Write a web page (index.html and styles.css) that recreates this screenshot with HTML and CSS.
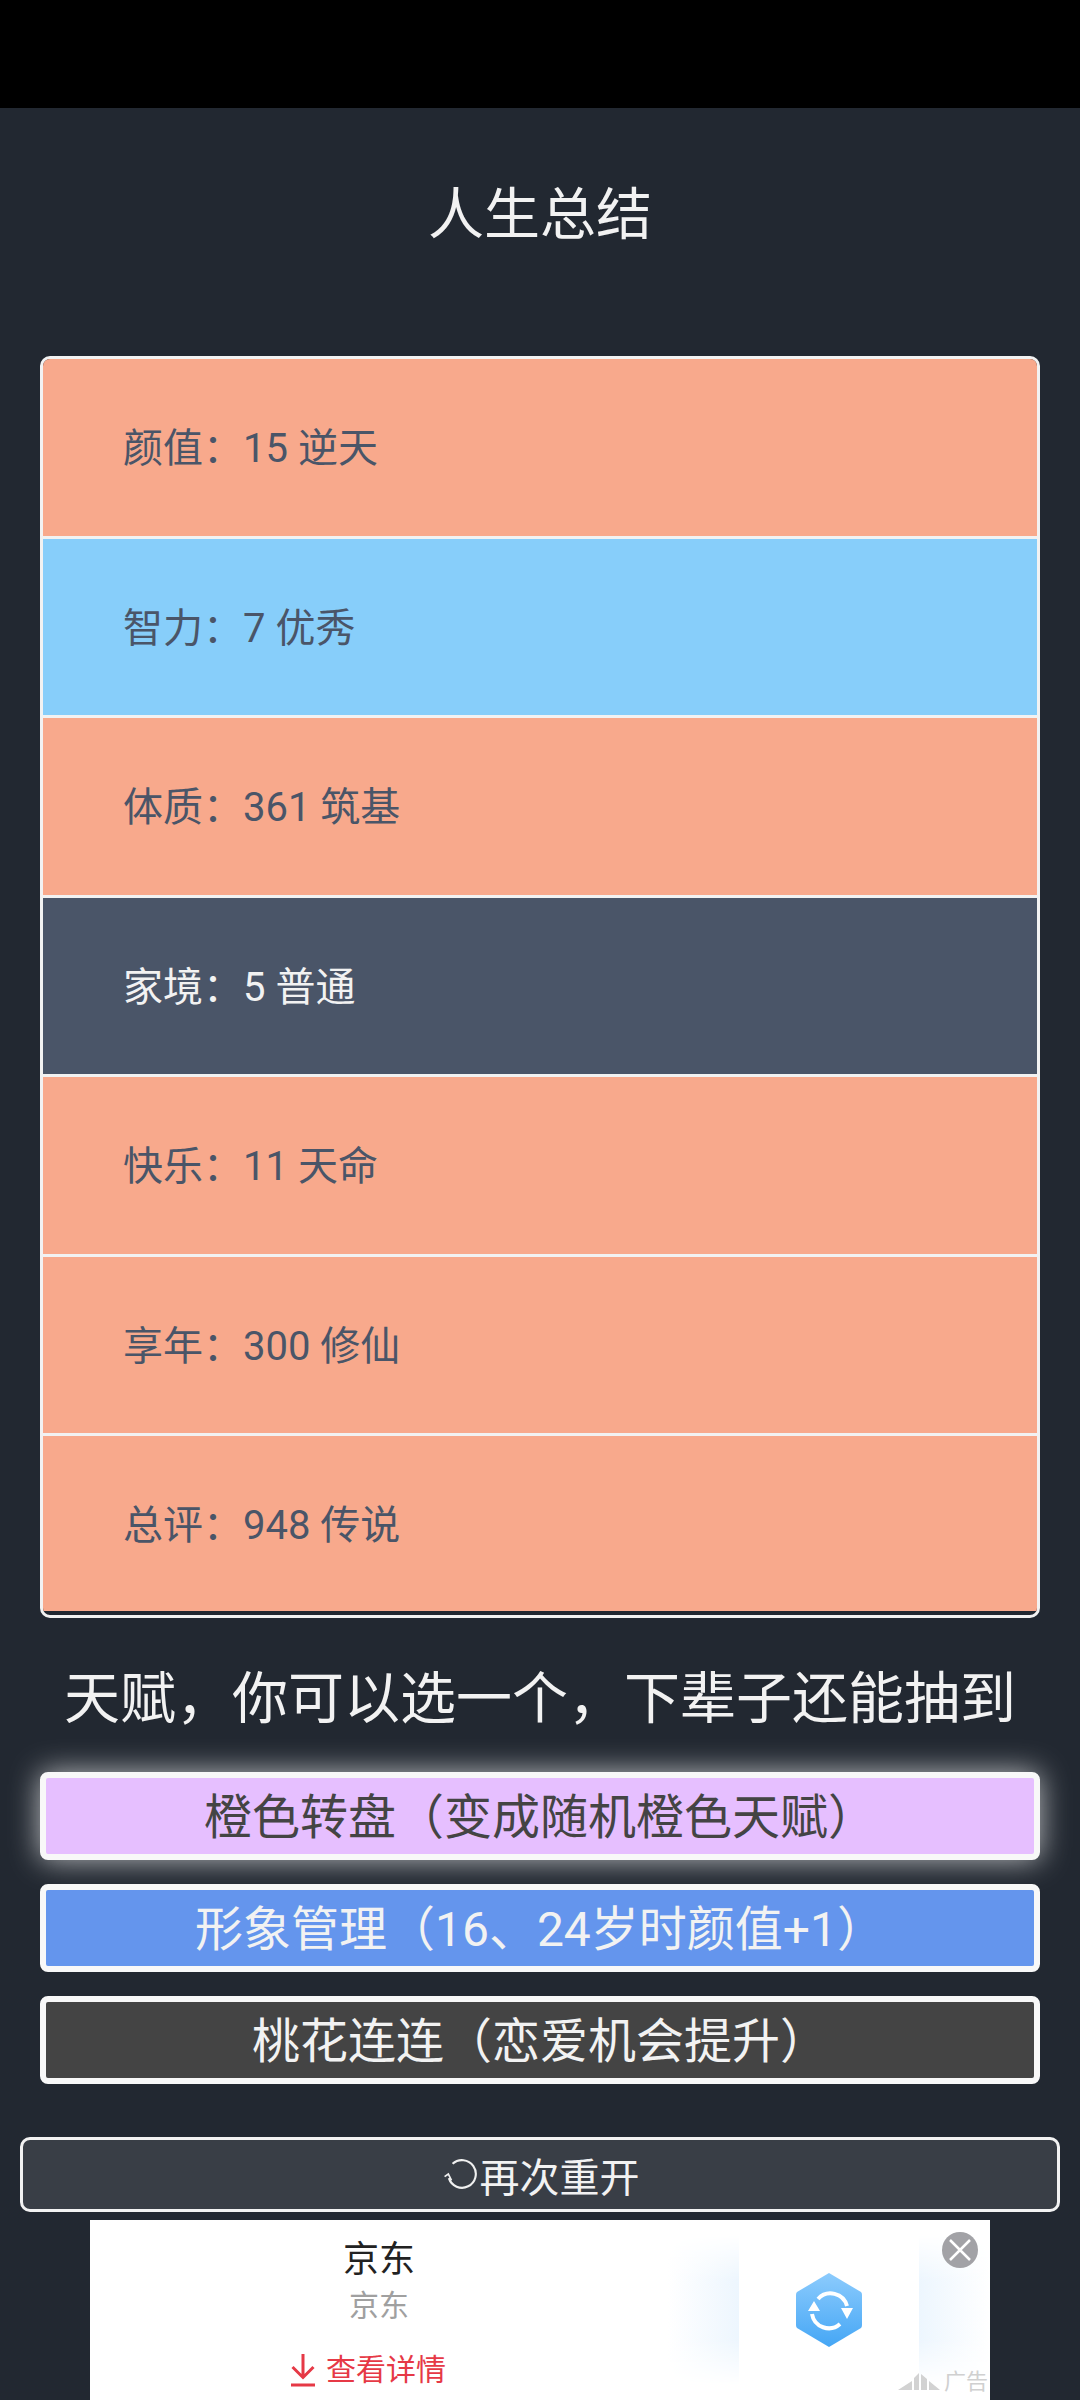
FILE: index.html
```html
<!DOCTYPE html>
<html lang="zh-CN">
<head>
  <meta charset="UTF-8" />
  <meta name="viewport" content="width=device-width, initial-scale=1.0" />
  <title>人生总结</title>
  <link rel="stylesheet" href="styles.css">
</head>
<body>
  <div class="status-bar"></div>

  <div class="page">
    <h1 class="title">人生总结</h1>

    <ul class="summary">
      <li class="row orange">颜值：15 逆天</li>
      <li class="row blue">智力：7 优秀</li>
      <li class="row orange">体质：361 筑基</li>
      <li class="row slate">家境：5 普通</li>
      <li class="row orange">快乐：11 天命</li>
      <li class="row orange">享年：300 修仙</li>
      <li class="row orange last">总评：948 传说</li>
    </ul>

    <h2 class="talent-title">天赋，你可以选一个，下辈子还能抽到</h2>

    <div class="talents">
      <button class="talent purple">橙色转盘（变成随机橙色天赋）</button>
      <button class="talent cornflower">形象管理（16、24岁时颜值+1）</button>
      <button class="talent grey">桃花连连（恋爱机会提升）</button>
    </div>

    <button class="restart">
      <svg class="restart-icon" viewBox="0 0 32 30" fill="none" stroke="#f0f0f0" stroke-width="2">
        <path d="M9 4.5 A13 13 0 1 1 5.5 18" />
        <path d="M1.5 16.5 L5 14 L8 20" stroke-width="1.6" />
      </svg>
      <span>再次重开</span>
    </button>
  </div>

  <div class="ad">
    <div class="ad-text">
      <div class="ad-name">京东</div>
      <div class="ad-sub">京东</div>
      <div class="ad-link">
        <svg class="ad-arrow" viewBox="0 0 26 34" fill="none" stroke="#e63946" stroke-width="3">
          <path d="M13 1 V24 M2.500 14 L13 24.500 L23.500 14 M1 32 H25" />
        </svg>
        <span>查看详情</span>
      </div>
    </div>
    <div class="ad-media">
      <div class="glow glow-left"></div>
      <svg class="app-icon" viewBox="0 0 68 76">
        <defs>
          <linearGradient id="hexFill" x1="0" y1="0" x2="0" y2="1">
            <stop offset="0" stop-color="#8ccbfd" />
            <stop offset="1" stop-color="#45a6f5" />
          </linearGradient>
        </defs>
        <path d="M34 1 L66 20 Q67 21 67 23 V53 Q67 55 66 56 L34 75 L2 56 Q1 55 1 53 V23 Q1 21 2 20 Z" fill="url(#hexFill)" />
        <path d="M23 27 A17 17 0 0 1 52 34 M45 52 A17 17 0 0 1 17 42" fill="none" stroke="#fff" stroke-width="4" />
        <path d="M13 39 L19 29 L25 39 Z M46 36 L58 36 L52 47 Z" fill="#fff" />
      </svg>
      <div class="glow glow-right"></div>
    </div>
    <div class="ad-close">
      <svg viewBox="0 0 36 36" stroke="#fff" stroke-width="2.500">
        <path d="M8 8 L28 28 M28 8 L8 28" />
      </svg>
    </div>
    <div class="ad-mark">
      <svg class="ad-logo" viewBox="0 0 42 18" fill="#d2d2d2">
        <path d="M0 17 L14 8 V17 Z M16 5 L21 0 V17 H16 Z M23 1 L29 6 V17 H23 Z M31 8 L42 17 H31 Z" />
      </svg>
      <span>广告</span>
    </div>
  </div>
</body>
</html>
```

FILE: styles.css
```css
* {
  box-sizing: border-box;
}
body {
  margin: 0;
  height: 2400px;
  overflow: hidden;
  background-color: #222831;
  font-family: Roboto, "Noto Sans CJK SC", sans-serif;
  color: #f2f2f2;
}
.status-bar {
  height: 108px;
  background-color: #000;
}
.page {
  padding: 0 20px;
}
.title {
  margin: 0;
  padding-top: 66px;
  height: 248px;
  font-size: 56px;
  line-height: 82px;
  font-weight: 400;
  text-align: center;
}

/* attribute list */
.summary {
  list-style: none;
  margin: 0 20px;
  padding: 0 0 4px;
  border: 3px solid #f2f2f2;
  border-radius: 10px;
  overflow: hidden;
}
.row {
  height: 179.5px;
  padding: 4px 0 0 80px;
  border-bottom: 3px solid #f2f2f2;
  font-size: 40px;
  line-height: 172px;
  color: #4a5568;
}
.row.last {
  border-bottom: none;
  height: 175px;
}
.orange {
  background-color: #f8a98c;
}
.blue {
  background-color: #87cefa;
}
.slate {
  background-color: #4a5568;
  color: #f2f2f2;
}

.talent-title {
  margin: 0;
  height: 154px;
  padding-top: 8px;
  font-size: 56px;
  line-height: 146px;
  font-weight: 400;
  text-align: center;
  white-space: nowrap;
}
.talents {
  display: flex;
  flex-direction: column;
  gap: 24px;
  margin: 0 20px;
}
.talent {
  height: 88px;
  padding: 3px 0 0;
  border: 6px solid #f8f8f8;
  border-radius: 8px;
  font-family: inherit;
  font-size: 48px;
  line-height: 72px;
  color: #f2f2f2;
}
.purple {
  background-color: #e6bfff;
  color: #444;
  box-shadow: 0 0 30px rgba(255, 255, 255, 0.7);
}
.cornflower {
  background-color: #6495ed;
}
.grey {
  background-color: #444;
}

.restart {
  display: flex;
  align-items: center;
  justify-content: center;
  gap: 3px;
  width: 100%;
  height: 75px;
  margin-top: 53px;
  padding: 0;
  border: 3px solid #f2f2f2;
  border-radius: 10px;
  background-color: #393e46;
  font-family: inherit;
  font-size: 40px;
  color: #f2f2f2;
}
.restart-icon {
  width: 34px;
  height: 32px;
  margin-left: 2px;
}

/* banner ad */
.ad {
  position: relative;
  display: flex;
  width: 900px;
  height: 180px;
  margin: 8px auto 0;
  background-color: #fff;
}
.ad-text {
  display: flex;
  flex-direction: column;
  align-items: center;
  width: 578px;
}
.ad-name {
  margin-top: 16px;
  font-size: 36px;
  line-height: 48px;
  color: #222;
}
.ad-sub {
  margin-top: 2px;
  font-size: 30px;
  line-height: 40px;
  color: #a0a0a0;
}
.ad-link {
  display: flex;
  align-items: center;
  gap: 10px;
  margin: 22px 22px 0 0;
  font-size: 30px;
  line-height: 44px;
  color: #e63946;
}
.ad-arrow {
  width: 26px;
  height: 34px;
}
.ad-media {
  display: flex;
  align-items: center;
  justify-content: space-between;
  flex: 1;
}
.glow {
  width: 71px;
  height: 150px;
  -webkit-mask-image: linear-gradient(to bottom, transparent, #000 30%, #000 70%, transparent);
  mask-image: linear-gradient(to bottom, transparent, #000 30%, #000 70%, transparent);
}
.glow-left {
  background: linear-gradient(to right, #fff, #edf6fe);
}
.glow-right {
  background: linear-gradient(to right, #edf6fe, #fff);
}
.app-icon {
  width: 68px;
  height: 76px;
}
.ad-close {
  position: absolute;
  top: 12px;
  right: 12px;
  width: 36px;
  height: 36px;
  border-radius: 50%;
  background-color: #a2a2a6;
}
.ad-close svg {
  display: block;
}
.ad-mark {
  position: absolute;
  right: 2px;
  bottom: 4px;
  display: flex;
  align-items: center;
  gap: 4px;
  font-size: 22px;
  line-height: 28px;
  color: #d0d0d0;
}
.ad-logo {
  width: 42px;
  height: 18px;
}
```
